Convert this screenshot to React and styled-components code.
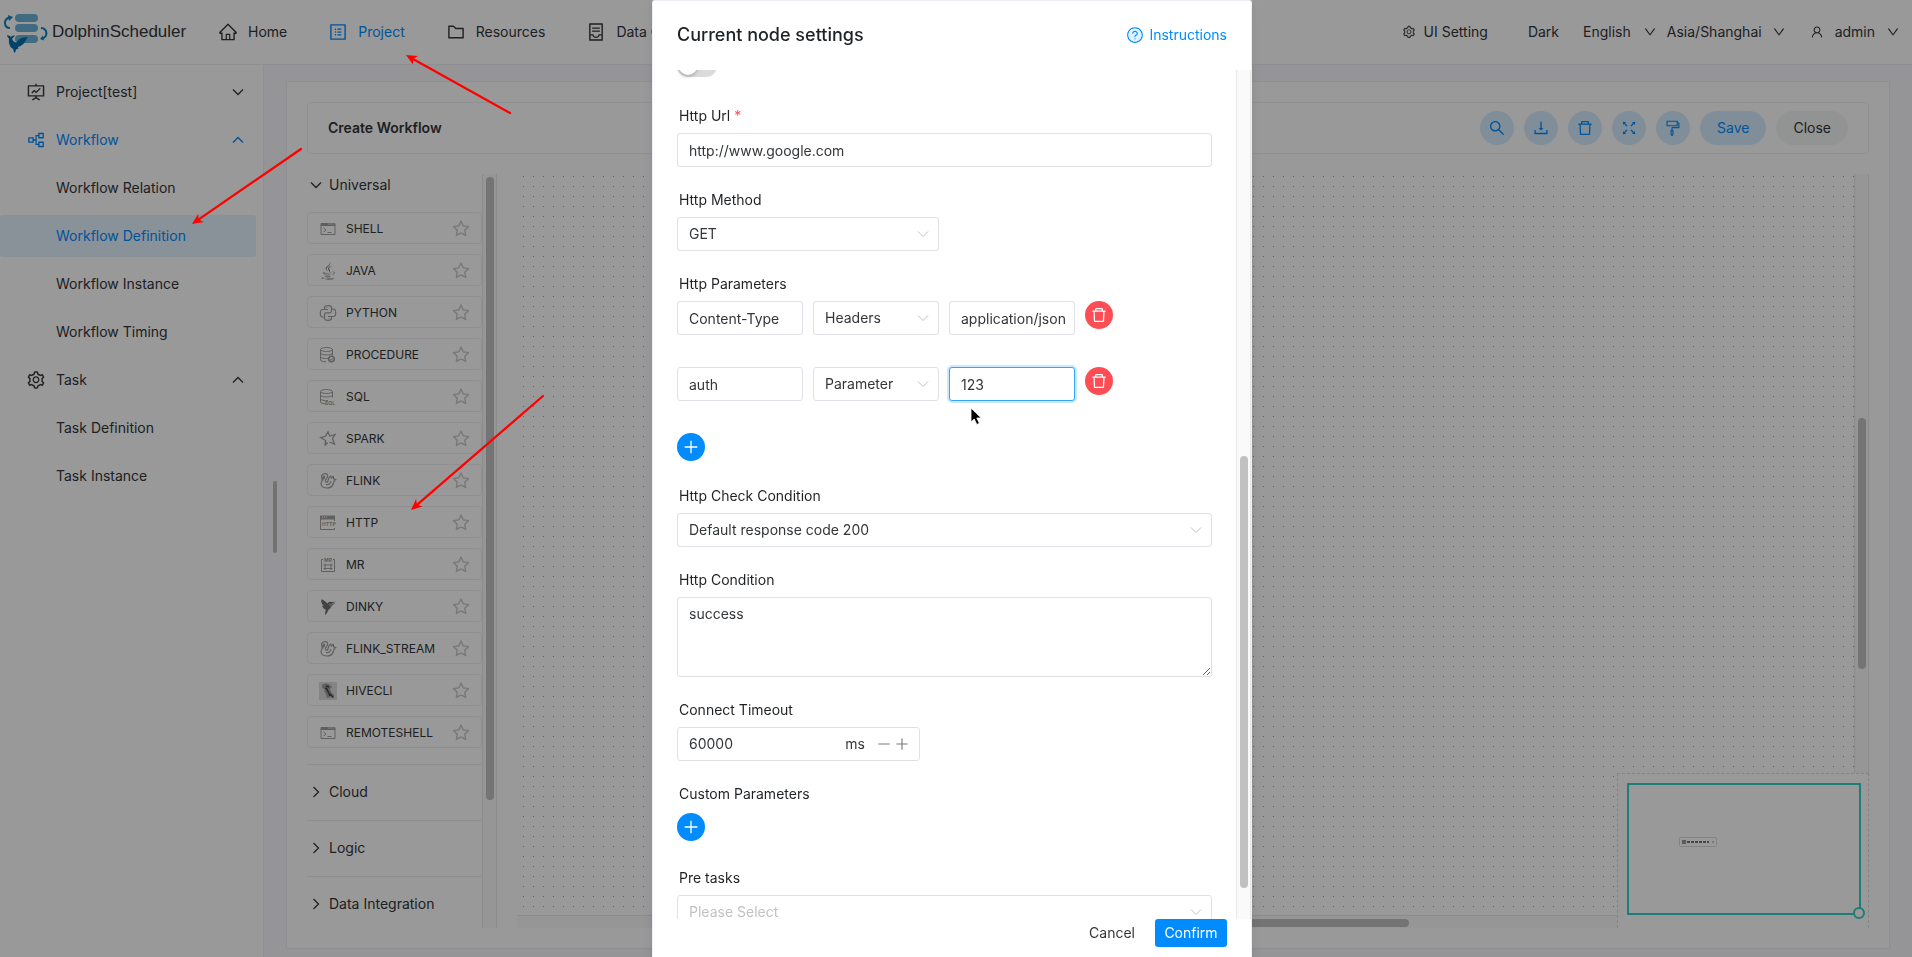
import { useEffect, useRef } from 'react';
import styled, { createGlobalStyle, css } from 'styled-components';
import {
  AiOutlineContainer,
  AiOutlineDelete,
  AiOutlineDown,
  AiOutlineDownload,
  AiOutlineFolder,
  AiOutlineFormatPainter,
  AiOutlineFullscreen,
  AiOutlineFundProjectionScreen,
  AiOutlineHome,
  AiOutlineMinus,
  AiOutlinePartition,
  AiOutlinePlus,
  AiOutlineProfile,
  AiOutlineSearch,
  AiOutlineSetting,
  AiOutlineStar,
  AiOutlineUser,
  AiTwotoneQuestionCircle,
} from 'react-icons/ai';
import { FaJava } from 'react-icons/fa';

const navItems = [
  { label: 'Home', icon: <AiOutlineHome /> },
  { label: 'Project', icon: <AiOutlineProfile />, active: true },
  { label: 'Resources', icon: <AiOutlineFolder /> },
  { label: 'Data Quality', icon: <AiOutlineContainer /> },
];

const sideMenu = [
  { label: 'Project[test]', icon: <AiOutlineFundProjectionScreen />, children: [] },
  {
    label: 'Workflow',
    icon: <AiOutlinePartition />,
    active: true,
    open: true,
    children: [
      { label: 'Workflow Relation' },
      { label: 'Workflow Definition', active: true },
      { label: 'Workflow Instance' },
      { label: 'Workflow Timing' },
    ],
  },
  {
    label: 'Task',
    icon: <AiOutlineSetting />,
    open: true,
    children: [{ label: 'Task Definition' }, { label: 'Task Instance' }],
  },
];

const toolButtons = [
  { label: 'Search', icon: <AiOutlineSearch /> },
  { label: 'Download', icon: <AiOutlineDownload /> },
  { label: 'Delete', icon: <AiOutlineDelete /> },
  { label: 'Fullscreen', icon: <AiOutlineFullscreen /> },
  { label: 'Format', icon: <AiOutlineFormatPainter /> },
];

const ShellIcon = () => (
  <svg viewBox="0 0 18 18" fill="none" stroke="currentColor">
    <path d="M2 3.5h14v11H2z" />
    <path d="M2 4.5h14" strokeWidth="3" />
    <path d="M4.5 8l2.5 2-2.5 2M8.5 12.5h4" />
    <path d="M9.500 4h1M11.500 4h1M13.500 4h1" stroke="#fff" />
  </svg>
);

const PythonIcon = () => (
  <svg viewBox="0 0 18 18" fill="none" stroke="currentColor" strokeWidth="1.2">
    <path d="M5.500 5.500V3.500C5.500 1 12.500 1 12.500 3.500v3.500c0 1-.8 1.800-1.800 1.800H7.300c-1 0-1.800.8-1.800 1.800v2.400H3.500C.6 13 .6 5.500 3.500 5.500H9" />
    <path d="M12.500 12.500v2c0 2.500-7 2.500-7 0v-1.500M12.500 5h2c2.900 0 2.900 7.500 0 7.500H9" />
    <path d="M7.500 3.500h.8M9.700 14.500h.8" />
  </svg>
);

const DatabaseIcon = ({ children }) => (
  <svg viewBox="0 0 18 18" fill="none" stroke="currentColor">
    <ellipse cx="7.500" cy="3.500" rx="6" ry="2" />
    <path d="M1.500 3.500v10.500c0 1 2.500 1.800 5.500 1.800M13.500 3.500v6M1.500 7c0 2.600 12 2.600 12 0M1.500 10.500c0 1.700 4 2.300 7.500 1.900" />
    {children}
  </svg>
);

const ProcedureIcon = () => (
  <DatabaseIcon>
    <circle cx="12.500" cy="13" r="2.800" strokeWidth="1.500" />
    <path d="M11 13.500l1.200.8 1.800-2" />
  </DatabaseIcon>
);

const SqlIcon = () => (
  <DatabaseIcon>
    <text x="6" y="16.500" fontSize="5" fontWeight="700" fill="currentColor" stroke="none">
      SQL
    </text>
  </DatabaseIcon>
);

const SparkIcon = () => (
  <svg viewBox="0 0 18 18" fill="none" stroke="currentColor" strokeWidth="1.300">
    <path d="M6 15.500l.6-5L1.500 7.500l5-1.200L9 2l1.800 4L16 4.500l-2.500 4L15.500 14l-5-2M6 15.500l2.500-3" />
  </svg>
);

const FlinkIcon = () => (
  <svg viewBox="0 0 18 18" fill="none" stroke="currentColor" strokeWidth="1.200">
    <path d="M3 7l1.500-2.500C5 3.500 6 4.500 5.500 5.500 4.500 7.500 2 8.500 2 11.500 2 14 4.500 16 8 16c4 0 5.700-2 6.300-4.500.5-2 .7-3 2.200-4l-2-.7-.2-2.300-2 1.500-.6-2C9.500 5 9.500 7 9 9c-.5 1.700-2.500 1.500-2.700 0C6 7 9 6 8.700 3.500 8.300.7 3.500 1 2.500 4z" />
    <path d="M7 12.500c2.500.8 4.500-.7 5-3.500" />
  </svg>
);

const HttpIcon = () => (
  <svg viewBox="0 0 18 18" fill="none" stroke="currentColor">
    <path d="M1.500 4v11.500h14V14M15.500 4v3" />
    <path d="M1 3.500h15" strokeWidth="4" />
    <path d="M3 3h1M5 3h1M7 3h1" stroke="#fff" />
    <text x="3" y="12" fontSize="5" fontWeight="700" fill="currentColor" stroke="none">
      HTTP
    </text>
  </svg>
);

const MrIcon = () => (
  <svg viewBox="0 0 18 18" fill="none" stroke="currentColor">
    <path d="M4 3.500H2.500v12h13v-12H14" />
    <text x="5" y="5.500" fontSize="5" fontWeight="700" fill="currentColor" stroke="none">
      MR
    </text>
    <path d="M4.500 9h9M4.500 12.500h9M6 7.500v6.500M12 7.500v6.500" />
  </svg>
);

const DinkyIcon = () => (
  <svg viewBox="0 0 18 18" fill="#707070">
    <path d="M2.500 1c2 1.500 4.500 2.500 6 4.500C9.500 4 10.500 3.500 12 4l5-.3-4 1.500c0 3-1 5-3.500 6.500-1 2-1.500 4-3.500 5.300.2-2.500.5-4 .6-5.500C5 11 3.500 9.500 3 7.500l2 .7C3 6.500 2 4 2 2l1 .8z" />
    <path d="M9 6l7.500-1-5 4z" fill="#999" />
  </svg>
);

const HiveIcon = () => (
  <svg viewBox="0 0 18 18">
    <path d="M0 0h18v18H0z" fill="#ddd" />
    <path d="M3 3c2-2 6-2 8 0l2 2-2 2 1 3 3 3v3h-3l-1-2-1 2H8l-1-4-2-3 1-2-3-1z" fill="#a0a0a0" />
    <path d="M6 6l2 1 1 3M9 9l2 5M11 12l3 3M7 4l3 1" fill="none" stroke="#444" strokeWidth="1.500" />
  </svg>
);

const tasks = [
  { name: 'SHELL', icon: <ShellIcon /> },
  { name: 'JAVA', icon: <FaJava color="#777" /> },
  { name: 'PYTHON', icon: <PythonIcon /> },
  { name: 'PROCEDURE', icon: <ProcedureIcon /> },
  { name: 'SQL', icon: <SqlIcon /> },
  { name: 'SPARK', icon: <SparkIcon /> },
  { name: 'FLINK', icon: <FlinkIcon /> },
  { name: 'HTTP', icon: <HttpIcon /> },
  { name: 'MR', icon: <MrIcon /> },
  { name: 'DINKY', icon: <DinkyIcon /> },
  { name: 'FLINK_STREAM', icon: <FlinkIcon /> },
  { name: 'HIVECLI', icon: <HiveIcon /> },
  { name: 'REMOTESHELL', icon: <ShellIcon /> },
];

const httpParams = [
  { prop: 'Content-Type', position: 'Headers', value: 'application/json' },
  { prop: 'auth', position: 'Parameter', value: '123', focused: true },
];

const Logo = () => (
  <svg width="50" height="44" viewBox="0 0 50 44" aria-hidden="true">
    <g fill="#6bb3d6">
      <rect x="15" y="4" width="23" height="8" rx="4" />
      <rect x="15" y="14" width="23" height="8" rx="4" />
      <rect x="15" y="25" width="23" height="8" rx="4" />
    </g>
    <g fill="none" stroke="#0b86c4" strokeWidth="2">
      <path d="M10 18C4 18 3 10 9 7.500" />
      <path d="M41 18c7 .5 7 9 1 10.500" />
    </g>
    <path d="M8 5l5 2-4 4zM43 25.500l-3 3.500 4 1.500z" fill="#0b86c4" />
    <path
      d="M7 25c2 .5 3 1 3.800 2 1.200-1.200 2.200-1.500 4.200-1.500-1 1.500-1.800 2.300-3 3 .8 2.500 2.500 4 4.500 4 2-4 6-6 12-5.200-1.500.7-2 1.500-2.500 2.500-1.500 4-4.500 6-8 7.200l.5 1.500-2.500 1-1 3.500c-1-1-1.600-2-1.800-4C10 37.500 8.500 34 9 28.500 7.800 27.500 7.200 26.500 7 25z"
      fill="#0070ad"
    />
  </svg>
);

const Chevron = ({ direction }) => (
  <ChevronSvg viewBox="0 0 16 16" $direction={direction} aria-hidden="true">
    <path d="M3 5.500l5 5 5-5" />
  </ChevronSvg>
);

const Arrow = ({ from, to }) => {
  const angle = (Math.atan2(to[1] - from[1], to[0] - from[0]) * 180) / Math.PI;
  const length = Math.hypot(to[0] - from[0], to[1] - from[1]);
  return (
    <g transform={`translate(${to[0]} ${to[1]}) rotate(${angle})`}>
      <path d={`M${-length} 0H-6`} stroke="#f00" strokeWidth="2.300" strokeLinecap="round" />
      <path d="M0 0L-11 -5L-8 0L-11 5Z" fill="#f00" />
    </g>
  );
};

const FormItem = ({ label, htmlFor, required, children }) => (
  <Field>
    <FieldLabel htmlFor={htmlFor}>
      {label}
      {required && <Required>*</Required>}
    </FieldLabel>
    {children}
  </Field>
);

const SelectBox = ({ id, label, value, half, muted }) => (
  <SelectWrap $half={half}>
    <Select id={id} aria-label={label} defaultValue={value} $muted={muted}>
      <option value={value}>{value}</option>
    </Select>
    <Chevron direction="down" />
  </SelectWrap>
);

const NodeSettings = () => {
  const scroller = useRef(null);

  useEffect(() => {
    scroller.current.scrollTop = 21;
  }, []);

  return (
    <Modal role="dialog" aria-label="Current node settings">
      <ModalHeader>
        <ModalTitle>Current node settings</ModalTitle>
        <HelpLink href="#instructions">
          <AiTwotoneQuestionCircle />
          Instructions
        </HelpLink>
      </ModalHeader>
      <ModalBody>
        <Scroller ref={scroller}>
          <SwitchRow>
            <Switch type="checkbox" aria-label="Toggle" />
          </SwitchRow>
          <FormItem label="Http Url" htmlFor="url" required>
            <Input id="url" defaultValue="http://www.google.com" />
          </FormItem>
          <FormItem label="Http Method" htmlFor="method">
            <SelectBox id="method" value="GET" half />
          </FormItem>
          <Field>
            <FieldLabel as="div">Http Parameters</FieldLabel>
            <Params>
              {httpParams.map((param) => (
                <ParamRow key={param.prop}>
                  <Input aria-label="Parameter name" defaultValue={param.prop} />
                  <SelectBox label="Parameter position" value={param.position} />
                  <Input
                    aria-label="Parameter value"
                    defaultValue={param.value}
                    $focused={param.focused}
                  />
                  <CircleButton $danger aria-label="Delete parameter">
                    <AiOutlineDelete />
                  </CircleButton>
                </ParamRow>
              ))}
              <CircleButton aria-label="Add parameter">
                <AiOutlinePlus />
              </CircleButton>
            </Params>
          </Field>
          <FormItem label="Http Check Condition" htmlFor="check">
            <SelectBox id="check" value="Default response code 200" />
          </FormItem>
          <FormItem label="Http Condition" htmlFor="condition">
            <TextArea id="condition" defaultValue="success" />
          </FormItem>
          <FormItem label="Connect Timeout" htmlFor="timeout">
            <NumberBox>
              <NumberInput id="timeout" defaultValue="60000" />
              <Unit>ms</Unit>
              <StepButton aria-label="Decrease">
                <AiOutlineMinus />
              </StepButton>
              <StepButton aria-label="Increase">
                <AiOutlinePlus />
              </StepButton>
            </NumberBox>
          </FormItem>
          <Field>
            <FieldLabel as="div">Custom Parameters</FieldLabel>
            <ButtonRow>
              <CircleButton aria-label="Add custom parameter">
                <AiOutlinePlus />
              </CircleButton>
            </ButtonRow>
          </Field>
          <FormItem label="Pre tasks" htmlFor="pre">
            <SelectBox id="pre" value="Please Select" muted />
          </FormItem>
        </Scroller>
        <Track>
          <Thumb $start={386} $length={432} />
        </Track>
      </ModalBody>
      <ModalFooter>
        <TextButton>Cancel</TextButton>
        <ConfirmButton>Confirm</ConfirmButton>
      </ModalFooter>
    </Modal>
  );
};

const App = () => {
  return (
    <>
      <GlobalStyle />
      <Page>
        <Header>
          <Brand href="#home">
            <Logo />
            DolphinScheduler
          </Brand>
          <Nav>
            {navItems.map((item) => (
              <NavLink key={item.label} href="#nav" $active={item.active}>
                {item.icon}
                {item.label}
              </NavLink>
            ))}
          </Nav>
          <HeaderTools>
            <HeaderButton>
              <AiOutlineSetting />
              UI Setting
            </HeaderButton>
            <HeaderButton $before={40}>Dark</HeaderButton>
            <HeaderButton $before={24} $gap={12}>
              English
              <AiOutlineDown />
            </HeaderButton>
            <HeaderButton $before={10} $gap={10}>
              Asia/Shanghai
              <AiOutlineDown />
            </HeaderButton>
            <HeaderButton $before={24} $gap={11}>
              <AiOutlineUser />
              admin
              <AiOutlineDown />
            </HeaderButton>
          </HeaderTools>
        </Header>
        <Body>
          <Sidebar>
            {sideMenu.map((group) => (
              <MenuGroup key={group.label}>
                <MenuParent $active={group.active} aria-expanded={!!group.open}>
                  {group.icon}
                  <MenuText>{group.label}</MenuText>
                  <Chevron direction={group.open ? 'up' : 'down'} />
                </MenuParent>
                {group.children.map((child) => (
                  <MenuChild key={child.label} href="#menu" $active={child.active}>
                    {child.label}
                  </MenuChild>
                ))}
              </MenuGroup>
            ))}
          </Sidebar>
          <Gutter>
            <GutterBar />
          </Gutter>
          <Card>
            <Toolbar>
              <ToolbarTitle>Create Workflow</ToolbarTitle>
              {toolButtons.map((button) => (
                <RoundTool key={button.label} aria-label={button.label}>
                  {button.icon}
                </RoundTool>
              ))}
              <PillButton $primary>Save</PillButton>
              <PillButton>Close</PillButton>
            </Toolbar>
            <Workspace>
              <TaskPanel>
                <GroupHeader>
                  <Chevron direction="down" />
                  Universal
                </GroupHeader>
                <TaskList>
                  {tasks.map((task) => (
                    <TaskItem key={task.name}>
                      <TaskIcon>{task.icon}</TaskIcon>
                      <TaskName>{task.name}</TaskName>
                      <AiOutlineStar />
                    </TaskItem>
                  ))}
                </TaskList>
                {['Cloud', 'Logic', 'Data Integration'].map((name) => (
                  <ClosedGroup key={name}>
                    <GroupHeader>
                      <Chevron direction="right" />
                      {name}
                    </GroupHeader>
                  </ClosedGroup>
                ))}
              </TaskPanel>
              <Track>
                <Thumb $start={3} $length={623} />
              </Track>
              <Canvas>
                <Grid aria-hidden="true">
                  <defs>
                    <pattern id="dots" width="10" height="10" patternUnits="userSpaceOnUse">
                      <rect x="6" y="2" width="1" height="1" fill="#a0a0a0" />
                    </pattern>
                  </defs>
                  <rect width="100%" height="100%" fill="url(#dots)" />
                </Grid>
                <Track>
                  <Thumb $start={244} $length={251} />
                </Track>
                <BottomTrack>
                  <BottomThumb />
                </BottomTrack>
                <MiniMap>
                  <MiniView>
                    <svg width="38" height="10" viewBox="0 0 38 10" aria-hidden="true">
                      <rect x=".5" y=".5" width="37" height="9" rx="1" fill="none" stroke="#dcdcdc" />
                      <path d="M3 3h4v4H3z" fill="#999" />
                      <path d="M8 5h22" stroke="#777" strokeWidth="2" strokeDasharray="3 1" />
                      <path d="M33 4h2v2h-2z" fill="#ccc" />
                    </svg>
                    <MiniHandle />
                  </MiniView>
                </MiniMap>
              </Canvas>
            </Workspace>
          </Card>
        </Body>
      </Page>
      <Overlay>
        <NodeSettings />
      </Overlay>
      <Annotations aria-hidden="true">
        <Arrow from={[510, 113]} to={[406, 55]} />
        <Arrow from={[301, 149]} to={[192, 224]} />
        <Arrow from={[543, 396]} to={[411, 510]} />
        <path
          d="M971 408v14l3.200-3 2.600 5.500 2.600-1.200-2.600-5.300h4.400z"
          fill="#000"
          stroke="#fff"
          strokeWidth=".8"
        />
      </Annotations>
    </>
  );
};

const GlobalStyle = createGlobalStyle`
  * {
    box-sizing: border-box;
  }
  body {
    margin: 0;
    color: #333639;
    font: 14px/22px Inter, 'Liberation Sans', sans-serif;
  }
  button, input, select, textarea {
    font: inherit;
    color: inherit;
  }
  button {
    padding: 0;
    border: none;
    background: none;
    cursor: pointer;
  }
  a {
    color: inherit;
    text-decoration: none;
  }
`;

const primary = '#008cff';
const line = '#efeff5';

const Page = styled.div`
  display: flex;
  flex-direction: column;
  height: 100vh;
  overflow: hidden;
  background: #fff;
`;

const Header = styled.header`
  display: flex;
  align-items: center;
  flex: none;
  height: 65px;
  padding-right: 12px;
  border-bottom: 1px solid ${line};
`;

const Brand = styled.a`
  display: flex;
  align-items: center;
  gap: 2px;
  width: 218px;
  font: 17px/22px 'Liberation Sans', Arial, sans-serif;
`;

const Nav = styled.nav`
  display: flex;
  flex: 1;
  gap: 41px;
`;

const NavLink = styled.a`
  display: flex;
  align-items: center;
  gap: 10px;
  white-space: nowrap;
  color: ${({ $active }) => ($active ? primary : 'inherit')};
  svg {
    width: 20px;
    height: 20px;
  }
`;

const HeaderTools = styled.div`
  display: flex;
  align-items: center;
`;

const HeaderButton = styled.button`
  display: flex;
  align-items: center;
  gap: ${({ $gap = 8 }) => $gap}px;
  margin-left: ${({ $before = 0 }) => $before}px;
  svg {
    width: 14px;
    height: 14px;
  }
`;

const Body = styled.div`
  display: flex;
  flex: 1;
  min-height: 0;
  padding-right: 22px;
  background: #f8f8fc;
`;

const Sidebar = styled.aside`
  flex: none;
  width: 264px;
  padding: 6px 7px 0 0;
  border-right: 1px solid ${line};
  background: #fff;
`;

const MenuGroup = styled.div`
  display: flex;
  flex-direction: column;
`;

const menuRow = css`
  display: flex;
  align-items: center;
  height: 42px;
  margin-bottom: 6px;
  border-radius: 3px;
  color: ${({ $active }) => ($active ? primary : 'inherit')};
`;

const MenuParent = styled.button`
  ${menuRow}
  gap: 10px;
  padding: 0 10px 0 26px;
  > svg:first-child {
    width: 20px;
    height: 20px;
  }
`;

const MenuText = styled.span`
  flex: 1;
  text-align: left;
`;

const MenuChild = styled.a`
  ${menuRow}
  padding-left: 56px;
  background: ${({ $active }) => ($active ? 'rgba(0, 140, 255, 0.1)' : 'none')};
`;

const ChevronSvg = styled.svg`
  flex: none;
  width: 16px;
  height: 16px;
  fill: none;
  stroke: currentColor;
  stroke-width: 1.3;
  transform: rotate(${({ $direction }) => ({ down: 0, up: 180, right: -90 })[$direction]}deg);
`;

const Gutter = styled.div`
  display: flex;
  align-items: center;
  justify-content: center;
  width: 22px;
  padding-top: 12px;
`;

const GutterBar = styled.div`
  width: 4px;
  height: 72px;
  border-radius: 2px;
  background: #bfbfbf;
`;

const Card = styled.main`
  display: flex;
  flex: 1;
  flex-direction: column;
  gap: 20px;
  min-width: 0;
  margin: 16px 0 8px;
  padding: 20px;
  border: 1px solid ${line};
  background: #fff;
`;

const Toolbar = styled.div`
  display: flex;
  align-items: center;
  gap: 10px;
  height: 52px;
  padding: 0 20px;
  border: 1px solid ${line};
  border-radius: 4px;
`;

const ToolbarTitle = styled.h1`
  flex: 1;
  margin: 0;
  font-size: 14px;
  font-weight: 600;
`;

const RoundTool = styled.button`
  display: flex;
  align-items: center;
  justify-content: center;
  width: 34px;
  height: 34px;
  border-radius: 17px;
  color: ${primary};
  background: rgba(0, 140, 255, 0.16);
  svg {
    width: 18px;
    height: 18px;
  }
`;

const PillButton = styled.button`
  height: 34px;
  padding: 0 17px;
  border-radius: 17px;
  color: ${({ $primary }) => ($primary ? primary : 'inherit')};
  background: ${({ $primary }) => ($primary ? 'rgba(0, 140, 255, 0.16)' : 'rgba(46, 51, 56, 0.05)')};
`;

const Workspace = styled.div`
  display: flex;
  flex: 1;
  min-height: 0;
`;

const TaskPanel = styled.div`
  flex: none;
  width: 175px;
  overflow: hidden;
`;

const GroupHeader = styled.div`
  display: flex;
  align-items: center;
  gap: 5px;
  height: 22px;
  padding-left: 1px;
`;

const TaskList = styled.div`
  display: flex;
  flex-direction: column;
  gap: 10px;
  padding: 16px 0;
`;

const TaskItem = styled.div`
  display: flex;
  align-items: center;
  height: 32px;
  padding: 1px 10px 0 11px;
  border: 1px solid ${line};
  border-radius: 4px;
  font-size: 12px;
  > svg {
    width: 20px;
    height: 20px;
    color: #c8c8c8;
  }
`;

const TaskIcon = styled.span`
  display: flex;
  margin-right: 9px;
  color: #a0a0a0;
  svg {
    width: 18px;
    height: 18px;
  }
`;

const TaskName = styled.span`
  flex: 1;
`;

const ClosedGroup = styled.div`
  padding: 16px 0 17px;
  border-top: 1px solid ${line};
`;

const Track = styled.div`
  flex: none;
  width: 15px;
  padding: 0 3px;
  border: solid #e8e8e8;
  border-width: 0 1px;
  background: #fafafa;
`;

const Thumb = styled.div`
  width: 8px;
  height: ${({ $length }) => $length}px;
  margin-top: ${({ $start }) => $start}px;
  border-radius: 4px;
  background: #c1c1c1;
`;

const Canvas = styled.div`
  position: relative;
  display: grid;
  flex: 1;
  grid-template-columns: 1fr 15px;
  grid-template-rows: 1fr 13px;
  min-width: 0;
  margin-left: 20px;
  overflow: hidden;
`;

const Grid = styled.svg`
  width: 100%;
  height: 100%;
`;

const BottomTrack = styled.div`
  grid-column: 1 / 3;
  padding: 3px 0;
  border-top: 1px solid #e8e8e8;
  background: #fafafa;
`;

const BottomThumb = styled.div`
  width: 33%;
  height: 8px;
  margin-left: 33%;
  border-radius: 4px;
  background: #c1c1c1;
`;

const MiniMap = styled.div`
  position: absolute;
  right: 0;
  bottom: 0;
  width: 252px;
  height: 155px;
  padding: 9px 7px 0 9px;
  border: 1px dashed #ddd;
  border-bottom: none;
  background: #fff;
`;

const MiniView = styled.div`
  position: relative;
  height: 132px;
  padding: 52px 0 0 50px;
  border: 2px solid #31d0c6;
  svg {
    display: block;
  }
`;

const MiniHandle = styled.span`
  position: absolute;
  right: -6px;
  bottom: -6px;
  width: 12px;
  height: 12px;
  border: 2px solid #31d0c6;
  border-radius: 50%;
  background: #fff;
`;

const Overlay = styled.div`
  position: fixed;
  inset: 0;
  display: flex;
  justify-content: center;
  padding-right: 8px;
  background: rgba(0, 0, 0, 0.4);
`;

const Modal = styled.section`
  display: flex;
  flex-direction: column;
  width: 600px;
  height: 100vh;
  border: 1px solid ${line};
  border-bottom: none;
  border-radius: 3px 3px 0 0;
  background: #fff;
  box-shadow: 0 3px 6px rgba(0, 0, 0, 0.06), 0 5px 12px 4px rgba(0, 0, 0, 0.04);
`;

const ModalHeader = styled.header`
  display: flex;
  align-items: center;
  justify-content: space-between;
  flex: none;
  height: 69px;
  padding: 0 24px 2px;
`;

const ModalTitle = styled.h2`
  margin: 0;
  color: #1f2225;
  font-size: 18px;
  font-weight: 500;
`;

const HelpLink = styled.a`
  display: flex;
  align-items: center;
  gap: 5px;
  color: ${primary};
  svg {
    width: 18px;
    height: 18px;
  }
  path {
    fill: ${primary};
  }
  path:nth-child(2) {
    fill: #e0f1ff;
  }
`;

const ModalBody = styled.div`
  display: flex;
  flex: 1;
  min-height: 0;
`;

const Scroller = styled.div`
  flex: 1;
  padding: 0 24px;
  overflow-y: auto;
  scrollbar-width: none;
`;

const SwitchRow = styled.div`
  display: flex;
  align-items: center;
  height: 34px;
  margin-bottom: 24px;
`;

const Switch = styled.input`
  display: flex;
  align-items: center;
  width: 40px;
  height: 22px;
  margin: 0;
  padding: 0 2px;
  border-radius: 11px;
  background: #dbdbdb;
  appearance: none;
  &::before {
    content: '';
    width: 18px;
    height: 18px;
    border-radius: 50%;
    background: #fff;
    box-shadow: 0 1px 4px rgba(0, 0, 0, 0.3);
  }
`;

const Field = styled.div`
  margin-bottom: 24px;
`;

const FieldLabel = styled.label`
  display: block;
  height: 26px;
  padding-left: 2px;
  color: #1f2225;
  line-height: 18px;
`;

const Required = styled.span`
  margin-left: 4px;
  color: #ff4d4f;
`;

const control = css`
  display: block;
  width: 100%;
  height: 34px;
  padding: 0 8px 0 11px;
  border: 1px solid #e0e0e6;
  border-radius: 3px;
  outline: none;
  background: #fff;
`;

const Input = styled.input`
  ${control}
  padding-right: 2px;
  ${({ $focused }) =>
    $focused &&
    css`
      border-color: #33a3ff;
      box-shadow: 0 0 0 2px rgba(0, 140, 255, 0.2);
    `}
`;

const TextArea = styled.textarea`
  ${control}
  height: 80px;
  padding: 5px 11px;
  resize: vertical;
`;

const SelectWrap = styled.div`
  position: relative;
  width: ${({ $half }) => ($half ? '262px' : '100%')};
  > svg {
    position: absolute;
    top: 9px;
    right: 8px;
    color: #c2c2c2;
    stroke-width: 1;
    pointer-events: none;
  }
`;

const Select = styled.select`
  ${control}
  appearance: none;
  color: ${({ $muted }) => ($muted ? '#c2c2c2' : 'inherit')};
`;

const Params = styled.div`
  display: flex;
  flex-direction: column;
  gap: 32px;
  padding-bottom: 2px;
`;

const ParamRow = styled.div`
  display: grid;
  grid-template-columns: repeat(3, 126px) 28px;
  gap: 10px;
`;

const ButtonRow = styled.div`
  height: 34px;
  padding-top: 2px;
`;

const CircleButton = styled.button`
  display: flex;
  align-items: center;
  justify-content: center;
  width: 28px;
  height: 28px;
  border-radius: 50%;
  color: #fff;
  background: ${({ $danger }) => ($danger ? '#ff4d55' : primary)};
  svg {
    width: 18px;
    height: 18px;
  }
`;

const NumberBox = styled.div`
  ${control}
  display: flex;
  align-items: center;
  width: 243px;
`;

const NumberInput = styled.input`
  flex: 1;
  min-width: 0;
  padding: 0;
  border: none;
  outline: none;
`;

const Unit = styled.span`
  margin-right: 10px;
`;

const StepButton = styled.button`
  display: flex;
  padding: 0 1px;
  color: #767c82;
  svg {
    width: 16px;
    height: 16px;
  }
`;

const ModalFooter = styled.footer`
  display: flex;
  align-items: flex-start;
  justify-content: flex-end;
  gap: 20px;
  flex: none;
  height: 38px;
  padding: 0 24px;
`;

const TextButton = styled.button`
  height: 28px;
`;

const ConfirmButton = styled.button`
  width: 72px;
  height: 28px;
  border-radius: 3px;
  color: #fff;
  background: ${primary};
`;

const Annotations = styled.svg`
  position: fixed;
  inset: 0;
  width: 100%;
  height: 100%;
  pointer-events: none;
`;

export default App;
